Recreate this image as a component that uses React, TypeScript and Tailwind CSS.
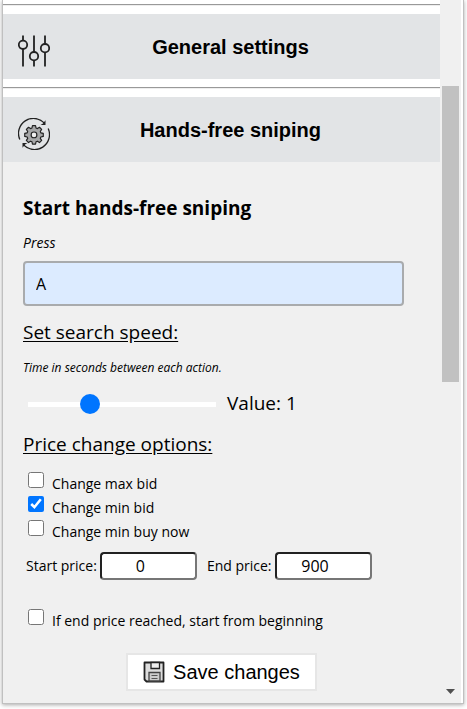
import { useState, type ReactNode } from "react";

function SlidersIcon() {
  return (
    <svg width="32" height="32" viewBox="0 0 32 32" fill="none" stroke="#222" strokeWidth="1.8" aria-hidden="true">
      <path d="M5 0.500V5.500M5 14V31.500M16 0.500V17M16 25.500V31.500M27 0.500V9M27 17.500V31.500" />
      <circle cx="5" cy="9.800" r="4.200" />
      <circle cx="16" cy="21.200" r="4.200" />
      <circle cx="27" cy="13.200" r="4.200" />
    </svg>
  );
}

function GearCycleIcon() {
  return (
    <svg width="32" height="32" viewBox="0 0 32 32" fill="none" stroke="#222" aria-hidden="true">
      <path strokeWidth="1.3" d="M1.800 21.500A15 15 0 0 1 26.500 5.200M30.200 10.500A15 15 0 0 1 5.500 26.800" />
      <path fill="#222" stroke="none" d="M27.500 2.200V7H22.500L25 5.500ZM4.500 29.800V25H9.500L7 26.500Z" />
      <g fill="#a6a7a8" strokeWidth="1.300" strokeLinejoin="round" transform="translate(1.600 1.600) scale(0.900)">
        <path d="M14.300 6.700h3.400l.6 2.700 1.500.6 2.300-1.500 2.400 2.400-1.500 2.300.6 1.500 2.700.6v3.400l-2.700.6-.6 1.500 1.500 2.300-2.400 2.400-2.300-1.500-1.500.6-.6 2.700h-3.400l-.6-2.700-1.500-.6-2.300 1.500-2.400-2.400 1.500-2.300-.6-1.500-2.700-.6v-3.400l2.700-.6.6-1.500-1.500-2.300 2.400-2.400 2.300 1.500 1.500-.6Z" />
        <circle cx="16" cy="17" r="3.200" fill="#f0f0f0" />
      </g>
    </svg>
  );
}

function SaveIcon() {
  return (
    <svg width="22" height="22" viewBox="0 0 22 22" fill="none" stroke="#222" aria-hidden="true">
      <path d="M1.500 1.500H20.500V20.500H3.500L1.500 18.500Z" fill="#ddd" strokeWidth="1.800" strokeLinejoin="round" />
      <path d="M8 1.500H16.500V7.500H8Z" fill="#eee" strokeWidth="1.300" />
      <path d="M6 11.500H17V20H6Z" fill="#ccc" stroke="#444" strokeWidth="1.300" />
      <path d="M8.500 14.500H14.500M8.500 17.500H14.500" stroke="#555" strokeWidth="1.200" />
    </svg>
  );
}

function SectionHeader({ icon, title }: { icon: ReactNode; title: string }) {
  return (
    <>
      <hr className="h-0.5 border-t border-b border-t-[#999] border-b-[#eee]" />
      <button
        type="button"
        className="my-2 grid h-[65px] w-full grid-cols-[32px_1fr_14px] items-center bg-[#e2e4e6] px-[15px] font-['Liberation_Sans',Arial,sans-serif] text-xl font-bold"
      >
        <span className="pt-2">{icon}</span>
        <span>{title}</span>
      </button>
    </>
  );
}

function CheckRow({ label, checked = false }: { label: string; checked?: boolean }) {
  return (
    <label className="flex h-6 items-start gap-2">
      <input
        type="checkbox"
        defaultChecked={checked}
        className="size-4 shrink-0 accent-[#0075ff]"
      />
      <span className="pt-0.5 leading-5">{label}</span>
    </label>
  );
}

function PriceField({ label, value }: { label: string; value: string }) {
  return (
    <label className="flex items-center gap-[3px]">
      <span>{label}</span>
      <input
        type="text"
        defaultValue={value}
        className="h-7 w-[97px] rounded border-2 border-t-[#222] border-r-[#767676] border-b-[#767676] border-l-[#222] bg-white pr-4 text-center text-base"
      />
    </label>
  );
}

export default function App() {
  const [speed, setSpeed] = useState(1);
  return (
    <main className="bg-white pr-[3px] pb-[5px] pl-0.5 font-['Open_Sans','Segoe_UI',sans-serif] text-sm text-black">
      <div className="flex border-x border-b border-[#c0c0c0] bg-[#f0f0f0] shadow-[0_1px_4px_#aaa]">
        <div className="min-w-0 flex-1">
          <div className="bg-white pt-1">
            <SectionHeader icon={<SlidersIcon />} title="General settings" />
            <div className="-mb-2">
              <SectionHeader icon={<GearCycleIcon />} title="Hands-free sniping" />
            </div>
          </div>
          <section className="px-5 pt-8 pb-3">
            <h2 className="text-[19px] leading-7 font-bold">Start hands-free sniping</h2>
            <label htmlFor="key" className="mt-[11px] block leading-5 italic">Press</label>
            <input
              id="key"
              type="text"
              defaultValue="A"
              className="mt-2 block h-[45px] w-[381px] max-w-full rounded border-2 border-[#a9abad] bg-[#dcebff] px-[11px] text-base"
            />
            <h3 className="mt-3 text-[19px] leading-7 underline underline-offset-2">Set search speed:</h3>
            <label htmlFor="speed" className="mt-3 block text-xs leading-5 italic">
              Time in seconds between each action.
            </label>
            <div className="mt-3 flex h-7 items-center gap-[11px] pl-[5px]">
              <input
                id="speed"
                type="range"
                min="0.1"
                max="3"
                step="0.1"
                value={speed}
                onChange={(e) => setSpeed(Number(e.target.value))}
                className="h-[5px] w-[188px] appearance-none bg-white [&::-webkit-slider-thumb]:size-5 [&::-webkit-slider-thumb]:appearance-none [&::-webkit-slider-thumb]:rounded-full [&::-webkit-slider-thumb]:bg-[#0075ff]"
              />
              <output htmlFor="speed" className="text-[19px]">Value: {speed}</output>
            </div>
            <h3 className="mt-3 text-[19px] leading-7 underline underline-offset-2">Price change options:</h3>
            <div className="mt-[14px] pl-[5px]">
              <CheckRow label="Change max bid" />
              <CheckRow label="Change min bid" checked />
              <CheckRow label="Change min buy now" />
            </div>
            <div className="mt-2 flex gap-[10px] pl-[3px]">
              <PriceField label="Start price:" value="0" />
              <PriceField label="End price:" value="900" />
            </div>
            <div className="mt-[29px] pl-[5px]">
              <CheckRow label="If end price reached, start from beginning" />
            </div>
            <div className="mt-5 flex justify-center">
              <button
                type="button"
                className="flex h-[38px] items-center gap-2 border-2 border-[#e6e6e6] bg-white px-[15px] font-['Liberation_Sans',Arial,sans-serif] text-xl"
              >
                <SaveIcon />
                Save changes
              </button>
            </div>
          </section>
        </div>
        <div className="flex w-[23px] flex-col items-center border-r-2 border-white bg-[#f0f0f0] pt-[86px] pb-[9px]" aria-hidden="true">
          <div className="h-[296px] w-[17px] bg-[#c1c1c1]" />
          <svg className="mt-auto" width="9" height="5" viewBox="0 0 9 5">
            <path d="M0 0H9L4.500 5Z" fill="#505050" />
          </svg>
        </div>
      </div>
    </main>
  );
}
